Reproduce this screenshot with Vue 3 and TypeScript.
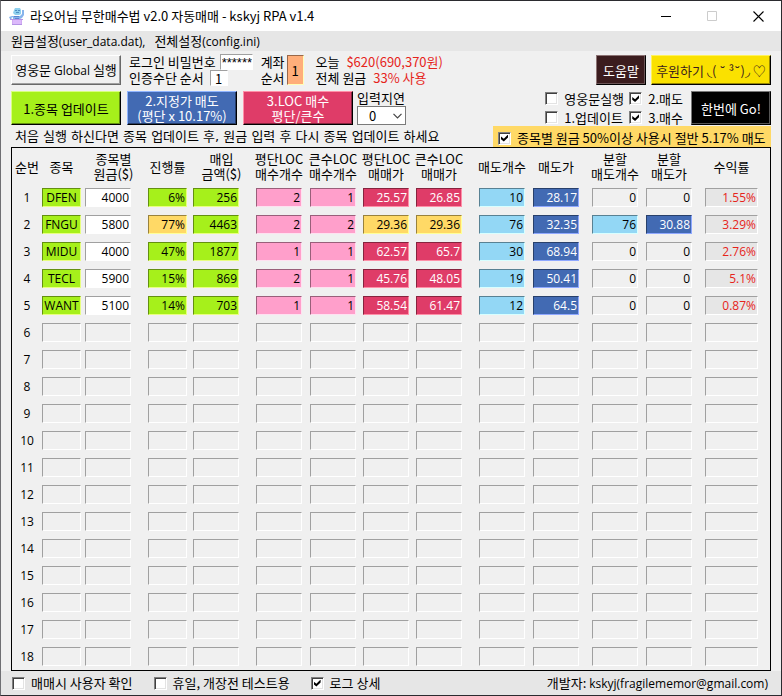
<script setup lang="ts">
import { reactive, ref } from 'vue'

type Tone = '' | 'green' | 'amber' | 'white' | 'pink' | 'red' | 'sky' | 'blue' | 'rate'

interface Column {
  lines: string[]
  width: number
  tone: Tone
  gap: string
}

interface Cell {
  text: string
  tone: Tone
}

const columns: Column[] = [
  { lines: ['종목'], width: 43, tone: 'green', gap: 'gap-4' },
  { lines: ['종목별', '원금($)'], width: 63, tone: 'white', gap: 'gap-17' },
  { lines: ['진행률'], width: 45, tone: 'green', gap: 'gap-6' },
  { lines: ['매입', '금액($)'], width: 63, tone: 'green', gap: 'gap-17' },
  { lines: ['평단LOC', '매수개수'], width: 54, tone: 'pink', gap: 'gap-8' },
  { lines: ['큰수LOC', '매수개수'], width: 53, tone: 'pink', gap: 'gap-7' },
  { lines: ['평단LOC', '매매가'], width: 53, tone: 'red', gap: 'gap-7' },
  { lines: ['큰수LOC', '매매가'], width: 63, tone: 'red', gap: 'gap-17' },
  { lines: ['매도개수'], width: 54, tone: 'sky', gap: 'gap-8' },
  { lines: ['매도가'], width: 59, tone: 'blue', gap: 'gap-13' },
  { lines: ['분할', '매도개수'], width: 54, tone: 'sky', gap: 'gap-8' },
  { lines: ['분할', '매도가'], width: 59, tone: 'blue', gap: 'gap-13' },
  { lines: ['수익률'], width: 65, tone: 'rate', gap: 'gap-12' },
]
const indexWidth = 30
const totalWidth = columns.reduce((sum, c) => sum + c.width, indexWidth)
const share = (w: number) => ({ width: `${(w / totalWidth) * 100}%` })

const data: string[][] = [
  ['DFEN', '4000', '6%', '256', '2', '1', '25.57', '26.85', '10', '28.17', '0', '0', '1.55%'],
  ['FNGU', '5800', '77%', '4463', '2', '2', '29.36', '29.36', '76', '32.35', '76', '30.88', '3.29%'],
  ['MIDU', '4000', '47%', '1877', '1', '1', '62.57', '65.7', '30', '68.94', '0', '0', '2.76%'],
  ['TECL', '5900', '15%', '869', '2', '1', '45.76', '48.05', '19', '50.41', '0', '0', '5.1%'],
  ['WANT', '5100', '14%', '703', '1', '1', '58.54', '61.47', '12', '64.5', '0', '0', '0.87%'],
]

// Past half of the principal, the progress and LOC price cells turn amber.
function toneOf(row: string[], col: number): Tone {
  const text = row[col]
  if ((col === 10 || col === 11) && text === '0') return ''
  if ((col === 2 || col === 6 || col === 7) && parseInt(row[2]) >= 50) return 'amber'
  return columns[col].tone
}

const rows = reactive<Cell[][]>(
  Array.from({ length: 18 }, (_, r) =>
    columns.map((_c, i): Cell => (data[r] ? { text: data[r][i], tone: toneOf(data[r], i) } : { text: '', tone: '' })),
  ),
)

const password = ref('******')
const authOrder = ref('1')
const accountOrder = ref('1')
const delay = ref('0')
const flags = reactive({
  launch: false,
  sell: true,
  update: false,
  buy: true,
  half: true,
  confirm: false,
  holiday: false,
  log: true,
})
</script>

<template>
  <div class="window">
    <header class="titlebar">
      <svg class="logo" width="16" height="17" viewBox="0 0 16 17" aria-hidden="true">
        <path d="M5 2 6 0h5l1 2v4l-2 1H6L4 5z" fill="#8fd0ee" />
        <path d="M6 2h2v1H6zM9 2h2v1H9zM7 4h3v1H7z" fill="#4f8fc4" />
        <path d="M3 8h8l2-2V2h2v5l-2 3-2 1H4V9L2 10l1 1H1L0 9z" fill="#86b4ec" />
        <path d="M5 8h5v1H5zM6 10h4v1H6z" fill="#5d84cf" />
        <path d="M3 11h10v5H3z" fill="#cfa9f2" />
        <path d="M4 12h8v4H4z" fill="#dcb9fb" />
        <path d="M1 11h13v1H1zM3 16h10v1H3z" fill="#b494e4" />
      </svg>
      <h1>라오어님 무한매수법 v2.0 자동매매 - kskyj RPA v1.4</h1>
      <div class="controls">
        <button type="button" aria-label="최소화">
          <svg width="11" height="11" viewBox="0 0 11 11"><path d="M0 5.5h10" stroke="#000" /></svg>
        </button>
        <button type="button" aria-label="최대화" disabled>
          <svg width="11" height="11" viewBox="0 0 11 11"><path d="M.5.5h9v9h-9z" fill="none" stroke="#ccc" /></svg>
        </button>
        <button type="button" aria-label="닫기">
          <svg width="11" height="11" viewBox="0 0 11 11"><path d="m.5.5 10 10m0-10-10 10" stroke="#000" stroke-width="1.1" /></svg>
        </button>
      </div>
    </header>

    <nav class="menu">
      <button type="button">원금설정<span class="latin">(user_data.dat),</span></button>
      <button type="button">전체설정<span class="latin">(config.ini)</span></button>
    </nav>

    <main>
      <div class="bar top">
        <button type="button" class="btn wide plain">영웅문 <span class="latin">Global</span> 실행</button>
        <div class="login">
          <div class="field">
            <label for="pw">로그인 비밀번호</label>
            <input id="pw" v-model="password" class="entry pw" type="text" />
          </div>
          <div class="field">
            <label for="auth">인증수단 순서</label>
            <input id="auth" v-model="authOrder" class="entry order" type="text" />
          </div>
        </div>
        <label class="account" for="acct">계좌<br />순서</label>
        <input id="acct" v-model="accountOrder" class="entry acct" type="text" />
        <div class="today">
          <p>오늘 <strong>$620(690,370원)</strong></p>
          <p>전체 원금 <strong>33% 사용</strong></p>
        </div>
        <button type="button" class="btn help">도움말</button>
        <button type="button" class="btn donate">후원하기 ◟( ˘ ³˘)◞ ♡</button>
      </div>

      <div class="bar actions">
        <button type="button" class="btn wide lime">1.종목 업데이트</button>
        <button type="button" class="btn wide navy">2.지정가 매도<br />(평단 x 10.17%)</button>
        <button type="button" class="btn wide rose">3.LOC 매수<br />평단/큰수</button>
        <div class="delay">
          <label for="delay">입력지연</label>
          <div class="select">
            <select id="delay" v-model="delay">
              <option>0</option>
              <option>1</option>
              <option>2</option>
            </select>
            <svg width="9" height="6" viewBox="0 0 9 6" aria-hidden="true"><path d="m.5.8 4 4 4-4" fill="none" stroke="#444" stroke-width="1.2" /></svg>
          </div>
        </div>
        <div class="steps">
          <label class="check"><input v-model="flags.launch" type="checkbox" />영웅문실행</label>
          <label class="check"><input v-model="flags.sell" type="checkbox" />2.매도</label>
          <label class="check"><input v-model="flags.update" type="checkbox" />1.업데이트</label>
          <label class="check"><input v-model="flags.buy" type="checkbox" />3.매수</label>
        </div>
        <button type="button" class="btn go">한번에 Go!</button>
      </div>

      <div class="bar notice">
        <p>처음 실행 하신다면 종목 업데이트 후, 원금 입력 후 다시 종목 업데이트 하세요</p>
        <label class="check half"><input v-model="flags.half" type="checkbox" />종목별 원금 50%이상 사용시 절반 5.17% 매도</label>
      </div>

      <div class="frame">
        <table>
          <colgroup>
            <col :style="share(indexWidth)" />
            <col v-for="(c, i) in columns" :key="i" :style="share(c.width)" />
          </colgroup>
          <thead>
            <tr>
              <th scope="col">순번</th>
              <th v-for="(c, i) in columns" :key="i" scope="col" :class="c.lines[1]?.endsWith('($)') ? 'gap-6' : c.gap">
                <span v-for="line in c.lines" :key="line">{{ line }}</span>
              </th>
            </tr>
          </thead>
          <tbody>
            <tr v-for="(row, r) in rows" :key="r">
              <th scope="row">{{ r + 1 }}</th>
              <td v-for="(cell, i) in row" :key="i" :class="columns[i].gap">
                <input
                  v-model="cell.text"
                  type="text"
                  :class="['cell', cell.tone, { ticker: i === 0 }]"
                  :aria-label="`${r + 1} ${columns[i].lines.join(' ')}`"
                />
              </td>
            </tr>
          </tbody>
        </table>
      </div>
    </main>

    <footer>
      <label class="check"><input v-model="flags.confirm" type="checkbox" />매매시 사용자 확인</label>
      <label class="check"><input v-model="flags.holiday" type="checkbox" />휴일, 개장전 테스트용</label>
      <label class="check"><input v-model="flags.log" type="checkbox" />로그 상세</label>
      <p>개발자: <span class="latin">kskyj(fragilememor@gmail.com)</span></p>
    </footer>
  </div>
</template>

<style>
body {
  margin: 0;
  background: #f0f0f0;
}
</style>

<style scoped>
.window {
  box-sizing: border-box;
  min-height: 100vh;
  display: flex;
  flex-direction: column;
  border: 1px solid #2b2b2f;
  border-left-color: #6f6f73;
  background: #f0f0f0;
  color: #000;
  font: 13px/16px 'Noto Sans CJK KR', 'DejaVu Sans', sans-serif;
  white-space: nowrap;
}
button,
input,
select {
  box-sizing: border-box;
  margin: 0;
  font: inherit;
  color: inherit;
}
p,
h1 {
  margin: 0;
  font: inherit;
}
.latin {
  font-family: 'Open Sans', sans-serif;
  font-size: 12px;
}
.titlebar {
  display: flex;
  align-items: center;
  height: 30px;
  padding-left: 8px;
  background: #fff;
}
.logo {
  margin-right: 5px;
}
.controls {
  display: flex;
  margin-left: auto;
}
.controls button {
  display: grid;
  place-items: center;
  width: 46px;
  height: 28px;
  padding: 0;
  border: 0;
  background: none;
}
.menu {
  display: flex;
  gap: 9px;
  height: 20px;
  padding-left: 10px;
  background: #e6e6e6;
}
.menu button {
  padding: 0;
  border: 0;
  background: none;
}
main {
  flex: 1;
  padding: 0 10px;
}
.bar {
  display: flex;
}
.top {
  height: 38px;
  align-items: center;
}
.actions {
  box-sizing: border-box;
  height: 37px;
  align-items: flex-start;
  padding-top: 2px;
}
.btn {
  height: 30px;
  padding: 0;
  border: 1px solid;
  line-height: 15px;
  white-space: nowrap;
}
.wide {
  width: 110px;
}
.actions .btn {
  height: 34px;
}
.plain {
  background: #f0f0f0;
  border-color: #fff #696969 #696969 #fff;
  box-shadow: inset -1px -1px #a0a0a0;
}
.lime {
  background: #a6f01b;
  border-color: #d8ff80 #000 #000 #d8ff80;
  box-shadow: inset -1px -1px #63900f;
}
.navy {
  margin-left: 6px;
  background: #426ab3;
  border-color: #8fb4ff #000 #000 #8fb4ff;
  box-shadow: inset -1px -1px #273f6b;
  color: #fff;
}
.rose {
  margin-left: 6px;
  background: #df3c68;
  border-color: #ff90a8 #000 #000 #ff90a8;
  box-shadow: inset -1px -1px #85243e;
  color: #fff;
}
.help {
  width: 50px;
  margin-left: auto;
  background: #3b1c1e;
  border-color: #8c7374 #000 #000 #8c7374;
  box-shadow: inset -1px -1px #6b5556;
  color: #fff;
}
.donate {
  width: 120px;
  margin-left: 5px;
  background: #fae100;
  border-color: #fff25a #000 #000 #fff25a;
  box-shadow: inset -1px -1px #968700;
  color: #3b1c1e;
}
.go {
  width: 80px;
  margin-left: 8px;
  background: #000;
  border-color: #777 #000 #000 #777;
  box-shadow: inset -1px -1px #555;
  color: #fff;
}
.login {
  margin-left: 8px;
}
.field {
  display: flex;
  align-items: center;
  height: 16px;
}
.entry {
  height: 16px;
  padding: 0 2px;
  border: 1px solid;
  border-color: #a0a0a0 #fff #fff #a0a0a0;
  background: #fff;
  line-height: 14px;
}
.pw {
  width: 33px;
  margin-left: 4px;
  padding: 0 0 0 1px;
  font-family: 'Liberation Sans', sans-serif;
}
.order {
  width: 18px;
  margin-left: 6px;
  text-align: center;
}
.account {
  margin-left: 8px;
}
.acct {
  width: 17px;
  height: 30px;
  margin-left: 2px;
  background: #ffae7a;
  border-color: #996849 #ffffb8 #ffffb8 #996849;
  text-align: center;
}
.today {
  margin-left: 12px;
}
.today strong {
  margin-left: 4px;
  font-weight: 400;
  color: #e6241b;
}
.delay {
  margin-left: 4px;
}
.delay label {
  display: block;
  height: 15px;
  line-height: 13px;
}
.select {
  display: grid;
  align-items: center;
  width: 49px;
}
.select > * {
  grid-area: 1 / 1;
}
.select svg {
  justify-self: end;
  margin-right: 4px;
  pointer-events: none;
}
select {
  width: 100%;
  height: 19px;
  padding: 0 0 0 11px;
  border: 1px solid #7a7a7a;
  border-radius: 0;
  background: #fff;
  appearance: none;
}
.steps {
  display: grid;
  grid-template-columns: 84px auto;
  grid-auto-rows: 19px;
  align-content: center;
  height: 34px;
  margin-left: auto;
}
.check {
  display: flex;
  align-items: center;
  gap: 6px;
}
.check input {
  appearance: none;
  display: grid;
  place-items: center;
  flex: none;
  width: 13px;
  height: 13px;
  border: 1px solid;
  border-color: #808080 #fff #fff #808080;
  background: #fff;
  box-shadow: inset 1px 1px #404040, inset -1px -1px #e3e3e3;
}
.check input:checked::before {
  content: '';
  width: 7px;
  height: 7px;
  background: #000;
  clip-path: polygon(0 28%, 40% 62%, 100% 0, 100% 42%, 40% 100%, 0 68%);
}
.notice {
  align-items: center;
  justify-content: space-between;
  height: 21px;
  padding-left: 4px;
}
.notice p {
  font-family: 'DejaVu Sans', 'Noto Sans CJK KR', sans-serif;
}
.half {
  box-sizing: border-box;
  width: 278px;
  height: 21px;
  padding-left: 5px;
  padding-top: 3px;
  background: #ffd966;
}
.frame {
  border: 1px solid #000;
}
table {
  width: 100%;
  table-layout: fixed;
  border-collapse: collapse;
}
th,
td {
  padding: 0;
  font-weight: 400;
}
thead tr {
  height: 36px;
}
thead th {
  line-height: 15px;
}
thead span {
  display: flex;
  justify-content: center;
}
tbody tr {
  height: 27px;
}
tbody th,
.cell {
  font-family: 'Open Sans', sans-serif;
  font-size: 12px;
}
.gap-4 {
  padding-right: 4px;
}
.gap-6 {
  padding-right: 6px;
}
.gap-7 {
  padding-right: 7px;
}
.gap-8 {
  padding-right: 8px;
}
.gap-12 {
  padding-right: 12px;
}
.gap-13 {
  padding-right: 13px;
}
.gap-17 {
  padding-right: 17px;
}
.cell {
  display: block;
  width: 100%;
  height: 19px;
  padding: 0 1px;
  border: 1px solid;
  border-color: #a0a0a0 #fff #fff #a0a0a0;
  background: #f0f0f0;
  line-height: 17px;
  text-align: right;
}
.ticker {
  text-align: center;
}
.green {
  background: #a6f01b;
  border-color: #649010 #e8ff80 #e8ff80 #649010;
}
.amber {
  background: #ffd966;
  border-color: #99823d #ffff99 #ffff99 #99823d;
}
.white {
  background: #fff;
}
.pink {
  background: #ff9fcb;
  border-color: #995f7a #ffe0f0 #ffe0f0 #995f7a;
}
.red {
  background: #df3c68;
  border-color: #86243e #ff8fa8 #ff8fa8 #86243e;
  color: #fff;
}
.sky {
  background: #93d7f5;
  border-color: #588193 #d8ffff #d8ffff #588193;
}
.blue {
  background: #426ab3;
  border-color: #28406b #8fa8ff #8fa8ff #28406b;
  color: #fff;
}
.rate {
  background: #e6e6e6;
  color: #e6241b;
}
footer {
  display: flex;
  align-items: center;
  gap: 21px;
  height: 24px;
  padding: 0 13px 0 11px;
  background: #e6e6e6;
}
footer p {
  margin-left: auto;
}
</style>
